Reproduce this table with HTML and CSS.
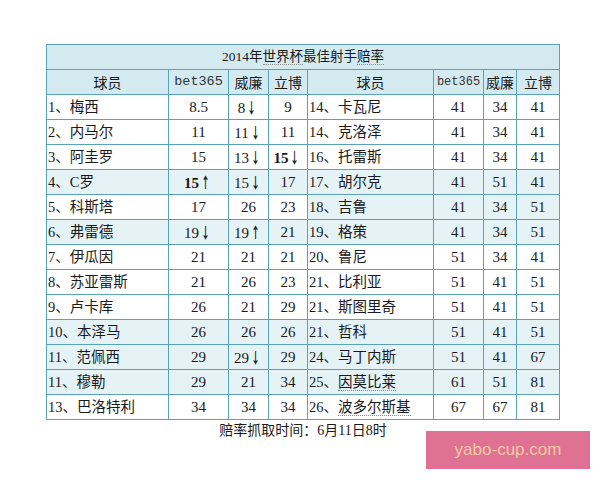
FILE: index.html
```html
<!DOCTYPE html>
<html>
<head>
<meta charset="utf-8">
<link rel="stylesheet" href="styles.css">
</head>
<body>
<div class="page">
  <table class="odds">
    <colgroup>
      <col class="c-name1"><col class="c-b1"><col class="c-w1"><col class="c-l1">
      <col class="c-name2"><col class="c-b2"><col class="c-w2"><col class="c-l2">
    </colgroup>
    <tr class="title"><td colspan="8">2014年<span class="dot">世界杯</span>最佳射手<span class="dot">赔率</span></td></tr>
    <tr class="head">
      <td>球员</td><td class="mono">bet365</td><td>威廉</td><td>立博</td>
      <td>球员</td><td class="mono sm">bet365</td><td>威廉</td><td>立博</td>
    </tr>
    <tr><td class="n">1、梅西</td><td>8.5</td><td>8<span class="ar">↓</span></td><td>9</td><td class="n">14、卡瓦尼</td><td>41</td><td>34</td><td>41</td></tr>
    <tr><td class="n">2、内马尔</td><td>11</td><td>11<span class="ar">↓</span></td><td>11</td><td class="n">14、克洛泽</td><td>41</td><td>34</td><td>41</td></tr>
    <tr><td class="n">3、阿圭罗</td><td>15</td><td>13<span class="ar">↓</span></td><td class="b">15<span class="ar">↓</span></td><td class="n">16、托雷斯</td><td>41</td><td>34</td><td>41</td></tr>
    <tr class="tint"><td class="n">4、C罗</td><td class="b">15<span class="ar">↑</span></td><td>15<span class="ar">↓</span></td><td>17</td><td class="n">17、胡尔克</td><td>41</td><td>51</td><td>41</td></tr>
    <tr><td class="n">5、科斯塔</td><td>17</td><td>26</td><td>23</td><td class="n t">18、吉鲁</td><td class="t">41</td><td class="t">34</td><td class="t">51</td></tr>
    <tr class="tint"><td class="n">6、弗雷德</td><td>19<span class="ar">↓</span></td><td>19<span class="ar">↑</span></td><td>21</td><td class="n">19、格策</td><td>41</td><td>34</td><td>51</td></tr>
    <tr><td class="n">7、伊瓜因</td><td>21</td><td>21</td><td>21</td><td class="n">20、鲁尼</td><td>51</td><td>34</td><td>41</td></tr>
    <tr><td class="n">8、苏亚雷斯</td><td>21</td><td>26</td><td>23</td><td class="n">21、比利亚</td><td>51</td><td>41</td><td>51</td></tr>
    <tr><td class="n">9、卢卡库</td><td>26</td><td>21</td><td>29</td><td class="n">21、斯图里奇</td><td>51</td><td>41</td><td>51</td></tr>
    <tr class="tint"><td class="n">10、本泽马</td><td>26</td><td>26</td><td>26</td><td class="n">21、哲科</td><td>51</td><td>41</td><td>51</td></tr>
    <tr class="tint"><td class="n">11、范佩西</td><td>29</td><td>29<span class="ar">↓</span></td><td>29</td><td class="n">24、马丁内斯</td><td>51</td><td>41</td><td>67</td></tr>
    <tr class="tint"><td class="n">11、穆勒</td><td>29</td><td>21</td><td>34</td><td class="n">25、<span class="dot">因莫比莱</span></td><td>61</td><td>51</td><td>81</td></tr>
    <tr><td class="n">13、巴洛特利</td><td>34</td><td>34</td><td>34</td><td class="n">26、<span class="dot">波多尔斯基</span></td><td>67</td><td>67</td><td>81</td></tr>
  </table>
  <p class="foot">赔率抓取时间：6月11日8时</p>
  <div class="mark">yabo-cup.com</div>
</div>
</body>
</html>
```

FILE: styles.css
```css
html, body {
  margin: 0;
  padding: 0;
  background: #ffffff;
}
.page {
  position: relative;
  width: 600px;
  height: 480px;
  padding: 44px 0 0 46px;
  box-sizing: border-box;
  font-family: "Liberation Serif", "Noto Sans CJK SC", serif;
  color: #1a1a1a;
}
.odds {
  border-collapse: collapse;
  table-layout: fixed;
  width: 514px;
  border: 1px solid #3f8ea3;
}
.c-name1 { width: 122px; }
.c-b1 { width: 60px; }
.c-w1 { width: 40px; }
.c-l1 { width: 39px; }
.c-name2 { width: 126px; }
.c-b2 { width: 50px; }
.c-w2 { width: 33px; }
.c-l2 { width: 43px; }
.odds td {
  border: 1px solid #5aa3b6;
  height: 24px;
  padding: 0;
  text-align: center;
  font-size: 15px;
  line-height: 16px;
  white-space: nowrap;
  overflow: hidden;
}
.odds td.n {
  text-align: left;
  padding-left: 1px;
  font-size: 14.5px;
  font-family: "Liberation Serif", "Noto Sans CJK SC", sans-serif;
}
.title td {
  background: #d4eaf1;
  font-size: 13.5px;
}
.head td {
  background: #d4eaf1;
  font-family: "Noto Sans CJK SC", sans-serif;
  font-size: 14px;
}
.head td.mono {
  font-family: "Liberation Mono", "DejaVu Sans Mono", monospace;
  font-size: 13.5px;
  color: #333333;
}
.head td.sm {
  font-size: 12px;
}
.tint td, .odds td.t {
  background: #e5f3f7;
}
.b {
  font-weight: bold;
}
.ar {
  font-family: "Noto Sans CJK SC", sans-serif;
  font-weight: bold;
  display: inline-block;
  transform: scaleX(0.6);
  margin-left: -1px;
}
.dot {
  border-bottom: 1px dotted #888888;
}
.foot {
  margin: 2px 0 0 0;
  width: 514px;
  text-align: center;
  font-size: 14px;
  line-height: 18px;
  font-family: "Liberation Serif", "Noto Sans CJK SC", serif;
}
.mark {
  position: absolute;
  left: 426px;
  top: 431px;
  width: 164px;
  height: 38px;
  background: #df7193;
  color: #f6caa5;
  font-family: "Liberation Sans", Arial, sans-serif;
  font-size: 17px;
  line-height: 38px;
  text-align: center;
}
```
